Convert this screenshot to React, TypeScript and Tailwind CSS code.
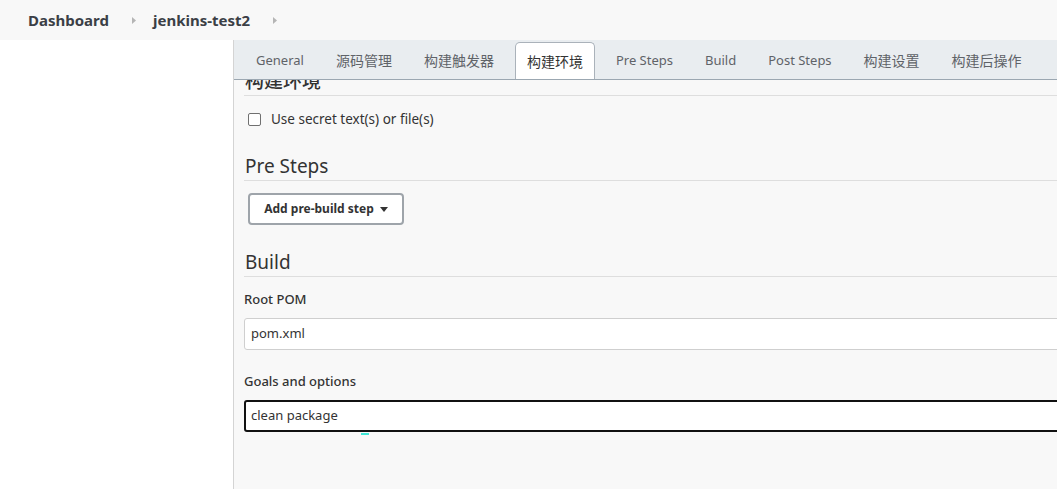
const tabs = ["General", "源码管理", "构建触发器", "构建环境", "Pre Steps", "Build", "Post Steps", "构建设置", "构建后操作"];
const activeTab = "构建环境";

const isLatin = (s: string) => /^[A-Za-z ]+$/.test(s);

function Chevron() {
  return (
    <svg width="6" height="9" viewBox="0 0 6 9" className="ml-[22px] mr-[16px]">
      <path d="M1 1 L5 4.5 L1 8 Z" fill="#b5b5b5" />
    </svg>
  );
}

function SectionHeading({ title, className = "" }: { title: string; className?: string }) {
  return (
    <h2 className={`text-[19px] leading-[27px] text-[#333] border-b border-[#dedede] pl-[1px] ${className}`}>{title}</h2>
  );
}

export default function App() {
  return (
    <div className="w-[1057px] h-[489px] overflow-hidden bg-white font-['Noto_Sans','Noto_Sans_CJK_SC',sans-serif] text-[#333]">
      <header className="h-[40px] bg-[#f8f8f8] flex items-center pl-[28px]">
        <span className="text-[15px] font-bold text-[#3b3f46]">Dashboard</span>
        <Chevron />
        <span className="text-[15px] font-bold text-[#3b3f46]">jenkins-test2</span>
        <Chevron />
      </header>

      <div className="flex h-[449px]">
        <aside className="w-[234px] shrink-0 bg-white border-r border-[#d4d4d4]" />

        <main className="flex-1 bg-[#f8f8f8] overflow-hidden flex flex-col">
          <nav className="h-[40px] shrink-0 bg-[#e9edf0] border-b border-[#9ba7b1] flex items-end pl-[6px]">
            {tabs.map((t) =>
              t === activeTab ? (
                <div
                  key={t}
                  className="mx-[5px] px-[11px] h-[37px] flex items-center bg-white border border-b-0 border-[#aab2ba] rounded-t-[5px] text-[14px] text-[#333] whitespace-nowrap"
                >
                  {t}
                </div>
              ) : (
                <div
                  key={t}
                  className={`mx-[5px] px-[11px] h-[37px] flex items-center text-[#5f6368] whitespace-nowrap ${isLatin(t) ? "text-[13px]" : "text-[14px]"}`}
                >
                  {t}
                </div>
              )
            )}
          </nav>

          <div className="flex-1 overflow-hidden pl-[10px]">
            <div className="w-[900px]">
              <SectionHeading title="构建环境" className="-mt-[12px] font-medium" />

              <label className="mt-[13px] h-[20px] flex items-center ml-[4px] gap-[10px]">
                <span className="w-[13px] h-[13px] rounded-[2px] border border-[#707070] bg-white" />
                <span className="text-[13.5px] text-[#333]">Use secret text(s) or file(s)</span>
              </label>

              <SectionHeading title="Pre Steps" className="mt-[24px]" />

              <button className="mt-[12px] ml-[4px] w-[156px] h-[32px] border-2 border-[#9ea4aa] rounded-[4px] bg-white flex items-center justify-center gap-[6px] text-[12px] font-bold text-[#333]">
                Add pre-build step
                <svg width="8" height="5" viewBox="0 0 8 5">
                  <path d="M0 0 H8 L4 5 Z" fill="#333" />
                </svg>
              </button>

              <SectionHeading title="Build" className="mt-[24px]" />

              <div className="mt-[13px] h-[20px] flex items-center text-[13px] font-medium text-[#333]">Root POM</div>
              <div className="mt-[8px] h-[32px] w-[840px] bg-white border border-[#cfcfcf] rounded-[3px] flex items-center pl-[6px] text-[13px] text-[#333]">
                pom.xml
              </div>

              <div className="mt-[22px] h-[20px] flex items-center text-[13px] font-medium text-[#333]">Goals and options</div>
              <div className="mt-[8px] h-[32px] w-[840px] bg-white border-2 border-[#111] rounded-[3px] flex items-center pl-[5px] text-[13px] text-[#333]">
                clean package
              </div>
              <div className="ml-[117px] mt-[1px] w-[8px] h-[2px] bg-[#3fe6d6]" />
            </div>
          </div>
        </main>
      </div>
    </div>
  );
}
